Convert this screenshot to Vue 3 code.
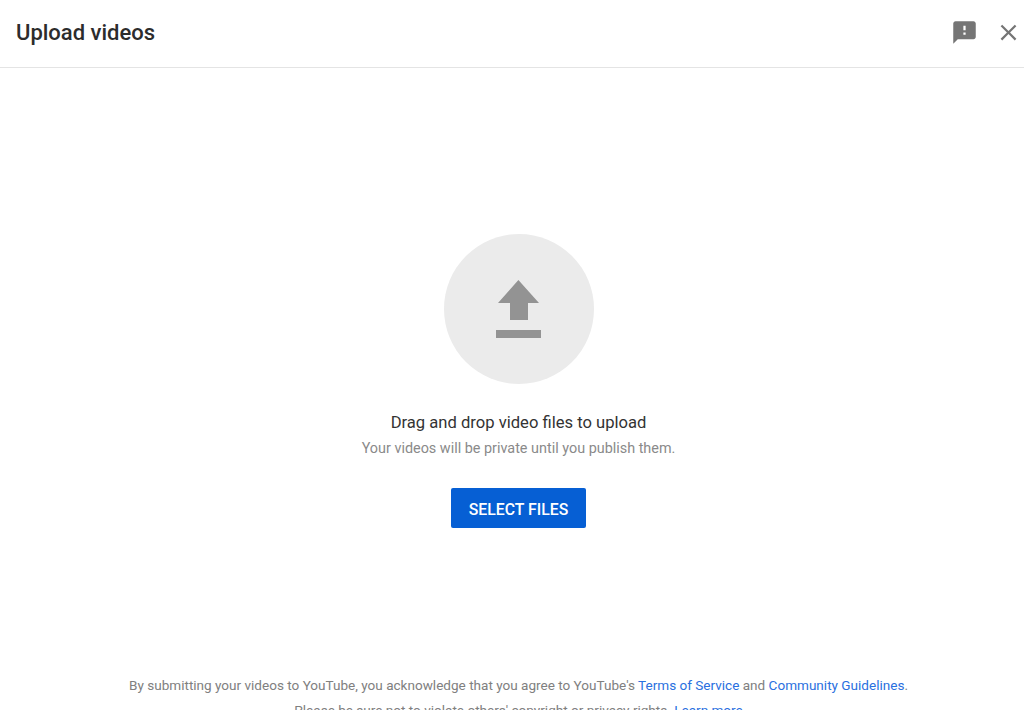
<script setup>
const title = 'Upload videos'
</script>

<template>
  <div class="dialog">
    <header class="dialog-header">
      <h1 class="dialog-title">{{ title }}</h1>
      <div class="dialog-actions">
        <svg class="icon-feedback" viewBox="0 0 24 24">
          <path d="M20 2H4c-1.1 0-1.99.9-1.99 2L2 22l4-4h14c1.1 0 2-.9 2-2V4c0-1.1-.9-2-2-2zm-7 12h-2v-2h2v2zm0-4h-2V6h2v4z" />
        </svg>
        <svg class="icon-close" viewBox="0 0 24 24">
          <path d="M19 6.41L17.59 5 12 10.59 6.41 5 5 6.41 10.59 12 5 17.59 6.41 19 12 13.41 17.59 19 19 17.59 13.41 12z" />
        </svg>
      </div>
    </header>

    <div class="dialog-body">
      <main class="dropzone">
        <div class="upload-circle">
          <svg class="icon-upload" viewBox="0 0 45 58">
            <path d="M22.4 0L43 23H32V40H14V23H2zM0 50H45V58H0z" />
          </svg>
        </div>
        <p class="drop-title">Drag and drop video files to upload</p>
        <p class="drop-subtitle">Your videos will be private until you publish them.</p>
        <button class="select-btn">SELECT FILES</button>
      </main>

      <footer class="legal">
        <p>By submitting your videos to YouTube, you acknowledge that you agree to YouTube's <a>Terms of Service</a> and <a>Community Guidelines</a>.</p>
        <p>Please be sure not to violate others' copyright or privacy rights. <a>Learn more</a></p>
      </footer>
    </div>
  </div>
</template>

<style>
html,
body {
  margin: 0;
  background: #fff;
  overflow: hidden;
}
</style>

<style scoped>
.dialog {
  height: 710px;
  overflow: hidden;
  font-family: Roboto, "Liberation Sans", sans-serif;
  background: #fff;
}

.dialog-header {
  height: 64px;
  display: flex;
  align-items: center;
  justify-content: space-between;
  padding: 0 2px 3px 16px;
  border-bottom: 1px solid #e4e4e4;
}

.dialog-title {
  margin: 0;
  font-size: 22px;
  font-weight: 500;
  color: #2c2c2c;
}

.dialog-actions {
  display: flex;
  align-items: center;
  gap: 17px;
}

.icon-feedback,
.icon-close {
  width: 27px;
  height: 27px;
  fill: #757575;
}

.dialog-body {
  padding-left: 13px;
}

.dropzone {
  display: flex;
  flex-direction: column;
  align-items: center;
  padding-top: 166px;
}

.upload-circle {
  width: 150px;
  height: 150px;
  border-radius: 50%;
  background: #ebebeb;
  display: flex;
  align-items: center;
  justify-content: center;
}

.icon-upload {
  width: 45px;
  height: 58px;
  fill: #939393;
}

.drop-title {
  margin: 28px 0 0;
  font-size: 16.6px;
  line-height: 21px;
  color: #333;
}

.drop-subtitle {
  margin: 6px 0 0;
  font-size: 14.4px;
  line-height: 20px;
  color: #8a8a8a;
}

.select-btn {
  margin-top: 29px;
  width: 135px;
  height: 40px;
  padding: 2px 0 0;
  border: none;
  border-radius: 2px;
  background: #065fd4;
  color: #fff;
  font-family: inherit;
  font-size: 15.8px;
  font-weight: 500;
}

.legal {
  margin-top: 145px;
  text-align: center;
  font-size: 13.55px;
  line-height: 25px;
  color: #808080;
}

.legal p {
  margin: 0;
}

.legal a {
  color: #2a70e0;
}
</style>
